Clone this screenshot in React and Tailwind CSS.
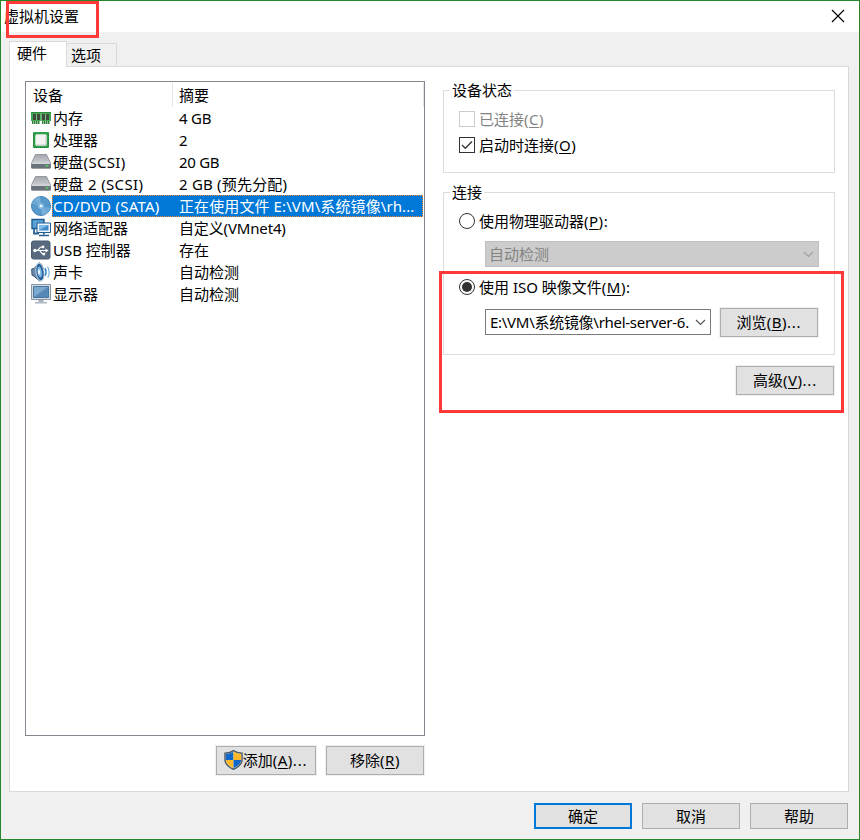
import clsx from 'clsx'

function MemoryIcon() {
  return (
    <svg width="20" height="20" viewBox="0 0 20 20">
      <path d="M0 4h20v9H0z" fill="#41a552" />
      <path d="M0 4.5h20" stroke="#2f8a3c" />
      <path d="M2 6h3v6H2zM6 6h3v6H6zM11 6h3v6h-3zM15 6h3v6h-3z" fill="#3f4a3c" />
      <path d="M5.5 6v6M10 5v8M14.500 6v6" stroke="#8fd198" strokeWidth=".7" />
      <path d="M1 14.500h8M11 14.500h8" stroke="#2f7f3a" strokeWidth="3" strokeDasharray="1.500 .5" />
    </svg>
  )
}

function CpuIcon() {
  return (
    <svg width="20" height="20" viewBox="0 0 20 20">
      <rect x="2" y="2" width="16" height="16" rx="1" fill="#2fa04b" />
      <path d="M2.500 3v14M17.500 3v14M3 17.500h14" fill="none" stroke="#1f7a34" strokeDasharray="1 1" />
      <rect x="4.500" y="4.500" width="11" height="11" rx="1.500" fill="#f3f3f2" stroke="#b8dcc0" />
      <path d="M6 15h9V6" fill="none" stroke="#c5c9c4" />
    </svg>
  )
}

function DiskIcon() {
  return (
    <svg width="20" height="20" viewBox="0 0 20 20">
      <defs>
        <linearGradient id="diskTop" x1="0" y1="0" x2="0" y2="1">
          <stop offset="0" stopColor="#a3a8ae" />
          <stop offset="1" stopColor="#e0e2e5" />
        </linearGradient>
      </defs>
      <path d="M4.500 2.500h11L19.500 11v5H.5v-5z" fill="url(#diskTop)" stroke="#858b92" strokeWidth=".8" />
      <path d="M.3 11.500h19.400v4q0 1-1 1H1.300q-1 0-1-1z" fill="#69717b" />
      <path d="M.5 11.300h19" stroke="#f4f5f6" strokeWidth=".8" />
      <rect x="14.500" y="13" width="3" height="1.500" fill="#56d25f" />
    </svg>
  )
}

function DiscIcon() {
  return (
    <svg width="20" height="20" viewBox="0 0 20 20">
      <circle cx="10" cy="10" r="9.500" fill="#5799cb" stroke="#4384b9" />
      <path d="M10 10 3 3.500A9.500 9.500 0 0 1 9 .8zM10 10l7 6.500a9.500 9.500 0 0 1-6 2.700z" fill="#8fc0e3" opacity=".6" />
      <path d="M10 10 .8 8A9.500 9.500 0 0 1 3 3.500zM10 10l9.200 2a9.500 9.500 0 0 1-2.200 4.500z" fill="#7fb8e0" opacity=".5" />
      <circle cx="10" cy="10" r="3" fill="#84bbe2" />
      <circle cx="10" cy="10" r="1.300" fill="#f2f8fc" />
    </svg>
  )
}

function NetworkIcon() {
  return (
    <svg width="20" height="20" viewBox="0 0 20 20">
      <path d="M1 1.500h12v9H1z" fill="#5ba3d8" stroke="#1f5c92" strokeWidth="1.400" />
      <path d="M3 11v4.500h5" fill="none" stroke="#2a6496" strokeWidth="1.800" />
      <path d="M6 5h13.500v9.500H6z" fill="#eef4fa" stroke="#1f5c92" />
      <path d="M8 7h9.500v5.500H8z" fill="#3f8bca" />
      <path d="M8 12.500V7h9.500z" fill="#7dbce8" />
      <path d="M12.800 14.500v2M8 17.500h10" stroke="#2a5f90" strokeWidth="1.600" />
    </svg>
  )
}

function UsbIcon() {
  return (
    <svg width="20" height="20" viewBox="0 0 20 20">
      <rect x="0.500" y="1" width="18.500" height="18" rx="2" fill="#596a7e" stroke="#4b5c70" />
      <path d="M4 10.500h11M6 10.500c2 0 2-3.500 4.500-3.500H12M8 10.500c2 0 2 3.500 4 3.500h1" fill="none" stroke="#fff" strokeWidth="1.200" />
      <circle cx="4" cy="10.500" r="1.800" fill="#fff" />
      <circle cx="12" cy="7" r="1.400" fill="#fff" />
      <path d="M14.500 8.500l3 2-3 2zM11.500 12.700h2.600v2.600h-2.600z" fill="#fff" />
    </svg>
  )
}

function SoundIcon() {
  return (
    <svg width="20" height="20" viewBox="0 0 20 20">
      <path d="M.7 7l2.300-.5L8 .7q3 .5 4 5v8q-1 5-3 5.500l-6-5-2-1z" fill="#6d8ba8" stroke="#345879" />
      <ellipse cx="9" cy="10" rx="4" ry="8.800" transform="rotate(-8 9 10)" fill="#285f98" stroke="#b6cde0" />
      <ellipse cx="8.700" cy="10" rx="2.200" ry="5.500" transform="rotate(-8 8.700 10)" fill="#7fb7e3" />
      <ellipse cx="8" cy="10" rx="1.100" ry="2.700" fill="#e9f5fd" />
      <path d="M14 6.200q2 3.800.3 7.500" fill="none" stroke="#2f83c4" strokeWidth="1.400" />
      <path d="M16.500 4.500q3.200 5.500.3 11" fill="none" stroke="#7fb5de" strokeWidth="1.300" />
    </svg>
  )
}

function DisplayIcon() {
  return (
    <svg width="20" height="20" viewBox="0 0 20 20">
      <path d="M.5.5h19v15H.5z" fill="#d5dce3" stroke="#8795a4" />
      <path d="M2.500 2.500h15v11h-15z" fill="#5588b5" stroke="#47779f" />
      <path d="M3 13V3h14z" fill="#7ca8cd" />
      <path d="M7.500 16h5v2h-5z" fill="#a7b1bb" />
      <path d="M4 18.700h12" stroke="#b4bec8" strokeWidth="1.800" />
    </svg>
  )
}

function ShieldIcon() {
  return (
    <svg width="19" height="20" viewBox="0 0 19 20">
      <path d="M9.500.7Q12.500 3 18 3.300v6.200q0 6-8.500 9.800Q1 15.500 1 9.500V3.300Q6.500 3 9.500.7z" fill="#fff" stroke="#4d5b66" strokeWidth="1.500" />
      <path d="M9.500 1.800V10H1.900V4q4.800-.2 7.600-2.200z" fill="#0f67c8" />
      <path d="M9.500 1.800q2.800 2 7.600 2.200v6H9.500z" fill="#fcb827" />
      <path d="M1.900 10h7.600v8.300Q2.100 14.500 1.900 10z" fill="#fcb827" />
      <path d="M17.100 10H9.500v8.300q7.400-3.800 7.600-8.300z" fill="#0f67c8" />
    </svg>
  )
}

const devices = [
  { icon: MemoryIcon, name: '内存', summary: '4 GB', summaryClass: 'tracking-[-0.2px]' },
  { icon: CpuIcon, name: '处理器', summary: '2' },
  { icon: DiskIcon, name: '硬盘(SCSI)', nameClass: 'tracking-[0.3px]', summary: '20 GB', summaryClass: 'tracking-[-0.3px]' },
  { icon: DiskIcon, name: '硬盘 2 (SCSI)', nameClass: 'tracking-[0.35px]', summary: '2 GB (预先分配)', summaryClass: 'tracking-[0.2px]' },
  {
    icon: DiscIcon,
    name: 'CD/DVD (SATA)',
    nameClass: 'tracking-[0.25px]',
    summary: '正在使用文件 E:\\VM\\系统镜像\\rh...',
    summaryClass: 'tracking-[0.1px]',
    selected: true,
  },
  { icon: NetworkIcon, name: '网络适配器', summary: '自定义(VMnet4)', summaryClass: 'tracking-[-0.15px]' },
  { icon: UsbIcon, name: 'USB 控制器', summary: '存在' },
  { icon: SoundIcon, name: '声卡', summary: '自动检测' },
  { icon: DisplayIcon, name: '显示器', summary: '自动检测' },
]

function Button({ primary, framed, className, children }) {
  return (
    <button
      className={clsx(
        'flex items-center justify-center bg-[#e1e1e1] whitespace-nowrap',
        primary ? 'border-2 border-[#0078d7]' : 'border border-[#adadad]',
        framed && 'outline outline-[#f0f0f0]',
        className
      )}
    >
      {children}
    </button>
  )
}

// label followed by its access key, e.g. 浏览(B)
function Label({ text, hotkey, after }) {
  return (
    <span className="whitespace-pre">
      {text}
      <span className="tracking-[0.5px]">
        (<span className="underline underline-offset-2">{hotkey}</span>)
      </span>
      <span className={after === '...' ? 'tracking-[0.8px]' : ''}>{after}</span>
    </span>
  )
}

function Checkbox({ checked, disabled, children }) {
  return (
    <div className={clsx('flex h-5 items-center gap-1', disabled && 'text-[#838383]')}>
      <span className={clsx('h-4 w-4 border bg-white', disabled ? 'border-[#cccccc]' : 'border-[#333333]')}>
        {checked && (
          <svg width="14" height="14" viewBox="0 0 14 14">
            <path d="M2 7l3.300 3.300 6.700-6.800" fill="none" stroke="#333" strokeWidth="1.300" />
          </svg>
        )}
      </span>
      {children}
    </div>
  )
}

function Radio({ checked, children }) {
  return (
    <div className="flex h-5 items-center gap-1">
      <span className="flex h-4 w-4 items-center justify-center rounded-full border border-[#333333] bg-white">
        {checked && <span className="h-2.5 w-2.5 rounded-full bg-[#333333]" />}
      </span>
      {children}
    </div>
  )
}

function Select({ disabled, className, children }) {
  return (
    <div
      className={clsx(
        'flex h-[26px] items-center justify-between border pr-1 pb-px pl-[3px] whitespace-nowrap',
        disabled ? 'border-[#bfbfbf] bg-[#cccccc] text-[#838383]' : 'border-[#7a7a7a] bg-white',
        className
      )}
    >
      {children}
      <svg className="mt-px" width="11" height="7" viewBox="0 0 11 7">
        <path d="M1 1l4.500 4.500L10 1" fill="none" stroke={disabled ? '#a0a0a0' : '#555'} strokeWidth="1.200" />
      </svg>
    </div>
  )
}

export default function App() {
  return (
    <div className="relative flex h-[840px] w-[860px] flex-col overflow-hidden border border-[#2a862a] bg-[#f0f0f0] font-['Noto_Sans','Noto_Sans_CJK_SC',sans-serif] text-[15px] leading-5 text-black">
      <header className="flex h-[31px] items-center justify-between bg-white pr-[14px] pl-[3px]">
        <span className="pb-[2px]">虚拟机设置</span>
        <svg className="-mt-px" width="14" height="14" viewBox="0 0 14 14">
          <path d="M1 1l12 12M13 1L1 13" stroke="#000" strokeWidth="1.200" />
        </svg>
      </header>

      <nav className="flex h-[34px] items-end pt-[9px] pl-2">
        <div className="z-10 -mb-px h-[26px] w-[58px] border border-b-0 border-[#d9d9d9] bg-white pt-px pl-[7px]">硬件</div>
        <div className="h-[23px] w-[50px] border border-b-0 border-l-0 border-[#d9d9d9] pt-px pl-1">选项</div>
      </nav>

      <main className="mr-[10px] ml-2 flex h-[726px] shrink-0 border border-[#d9d9d9] bg-white pl-[15px]">
        <section className="w-[400px] pt-[14px]">
          <div className="h-[655px] border border-[#828790]">
            <div className="flex h-[25px] pt-px">
              <div className="w-[147px] border-r border-[#e5e5e5] pt-[2px] pl-[7px]">设备</div>
              <div className="w-[251px] border-r border-[#e5e5e5] pt-[2px] pl-[6px]">摘要</div>
            </div>
            {devices.map(({ icon: Icon, name, nameClass, summary, summaryClass, selected }) => (
              <div key={name} className="flex h-[22px] items-center pr-px pl-[5px] whitespace-nowrap">
                <Icon />
                <div
                  className={clsx(
                    'ml-px flex h-[22px] flex-1 items-center border',
                    selected ? 'border-dotted border-[#ff8728] bg-[#0078d7] text-white' : 'border-transparent'
                  )}
                >
                  <span className={clsx('w-[126px]', nameClass)}>{name}</span>
                  <span className={summaryClass}>{summary}</span>
                </div>
              </div>
            ))}
          </div>
          <div className="mt-[10px] flex justify-end gap-[10px] pr-px">
            <Button framed className="h-[29px] w-[100px] pr-px pb-px">
              <ShieldIcon />
              <Label text="添加" hotkey="A" after="..." />
            </Button>
            <Button framed className="h-[29px] w-[98px] pb-px">
              <Label text="移除" hotkey="R" />
            </Button>
          </div>
        </section>

        <section className="ml-[18px] w-[392px] pt-[13px]">
          <fieldset className="h-[93px] border border-[#dcdcdc] pl-[15px]">
            <legend className="-ml-[9px] px-[2px]">设备状态</legend>
            <div className="flex flex-col gap-1.5 pt-[9px]">
              <Checkbox disabled>
                <Label text="已连接" hotkey="C" />
              </Checkbox>
              <Checkbox checked>
                <Label text="启动时连接" hotkey="O" />
              </Checkbox>
            </div>
          </fieldset>

          <fieldset className="mt-[9px] h-[173px] border border-[#dcdcdc] pl-[15px]">
            <legend className="-ml-[9px] px-[2px]">连接</legend>
            <div className="pt-[9px]">
              <Radio>
                <Label text="使用物理驱动器" hotkey="P" after=":" />
              </Radio>
              <Select disabled className="mt-[10px] ml-[26px] w-[334px]">
                自动检测
              </Select>
              <div className="mt-[10px]">
                <Radio checked>
                  <Label text="使用 ISO 映像文件" hotkey="M" after=":" />
                </Radio>
              </div>
              <div className="mt-[11px] ml-[26px] flex items-start gap-[9px]">
                <Select className="mt-px w-[226px]">
                  <span className="pl-px tracking-[-0.28px]">E:\VM\系统镜像\rhel-server-6.</span>
                </Select>
                <Button framed className="h-[29px] w-[98px] pb-px">
                  <Label text="浏览" hotkey="B" after="..." />
                </Button>
              </div>
            </div>
          </fieldset>

          <Button framed className="mt-[11px] mr-px ml-auto h-[29px] w-[98px] pb-px">
            <Label text="高级" hotkey="V" after="..." />
          </Button>
        </section>
      </main>

      <footer className="flex justify-end gap-[10px] pt-[11px] pr-[11px]">
        <Button primary className="h-[26px] w-[98px]">确定</Button>
        <Button className="h-[26px] w-[98px]">取消</Button>
        <Button className="h-[26px] w-[98px]">帮助</Button>
      </footer>

      {/* highlight boxes */}
      <div className="absolute top-0 left-[5px] h-[37px] w-[93px] border-3 border-[#ff3838]" />
      <div className="absolute top-[270px] left-[438px] z-10 h-[142px] w-[405px] border-3 border-[#ff3838]" />
    </div>
  )
}
